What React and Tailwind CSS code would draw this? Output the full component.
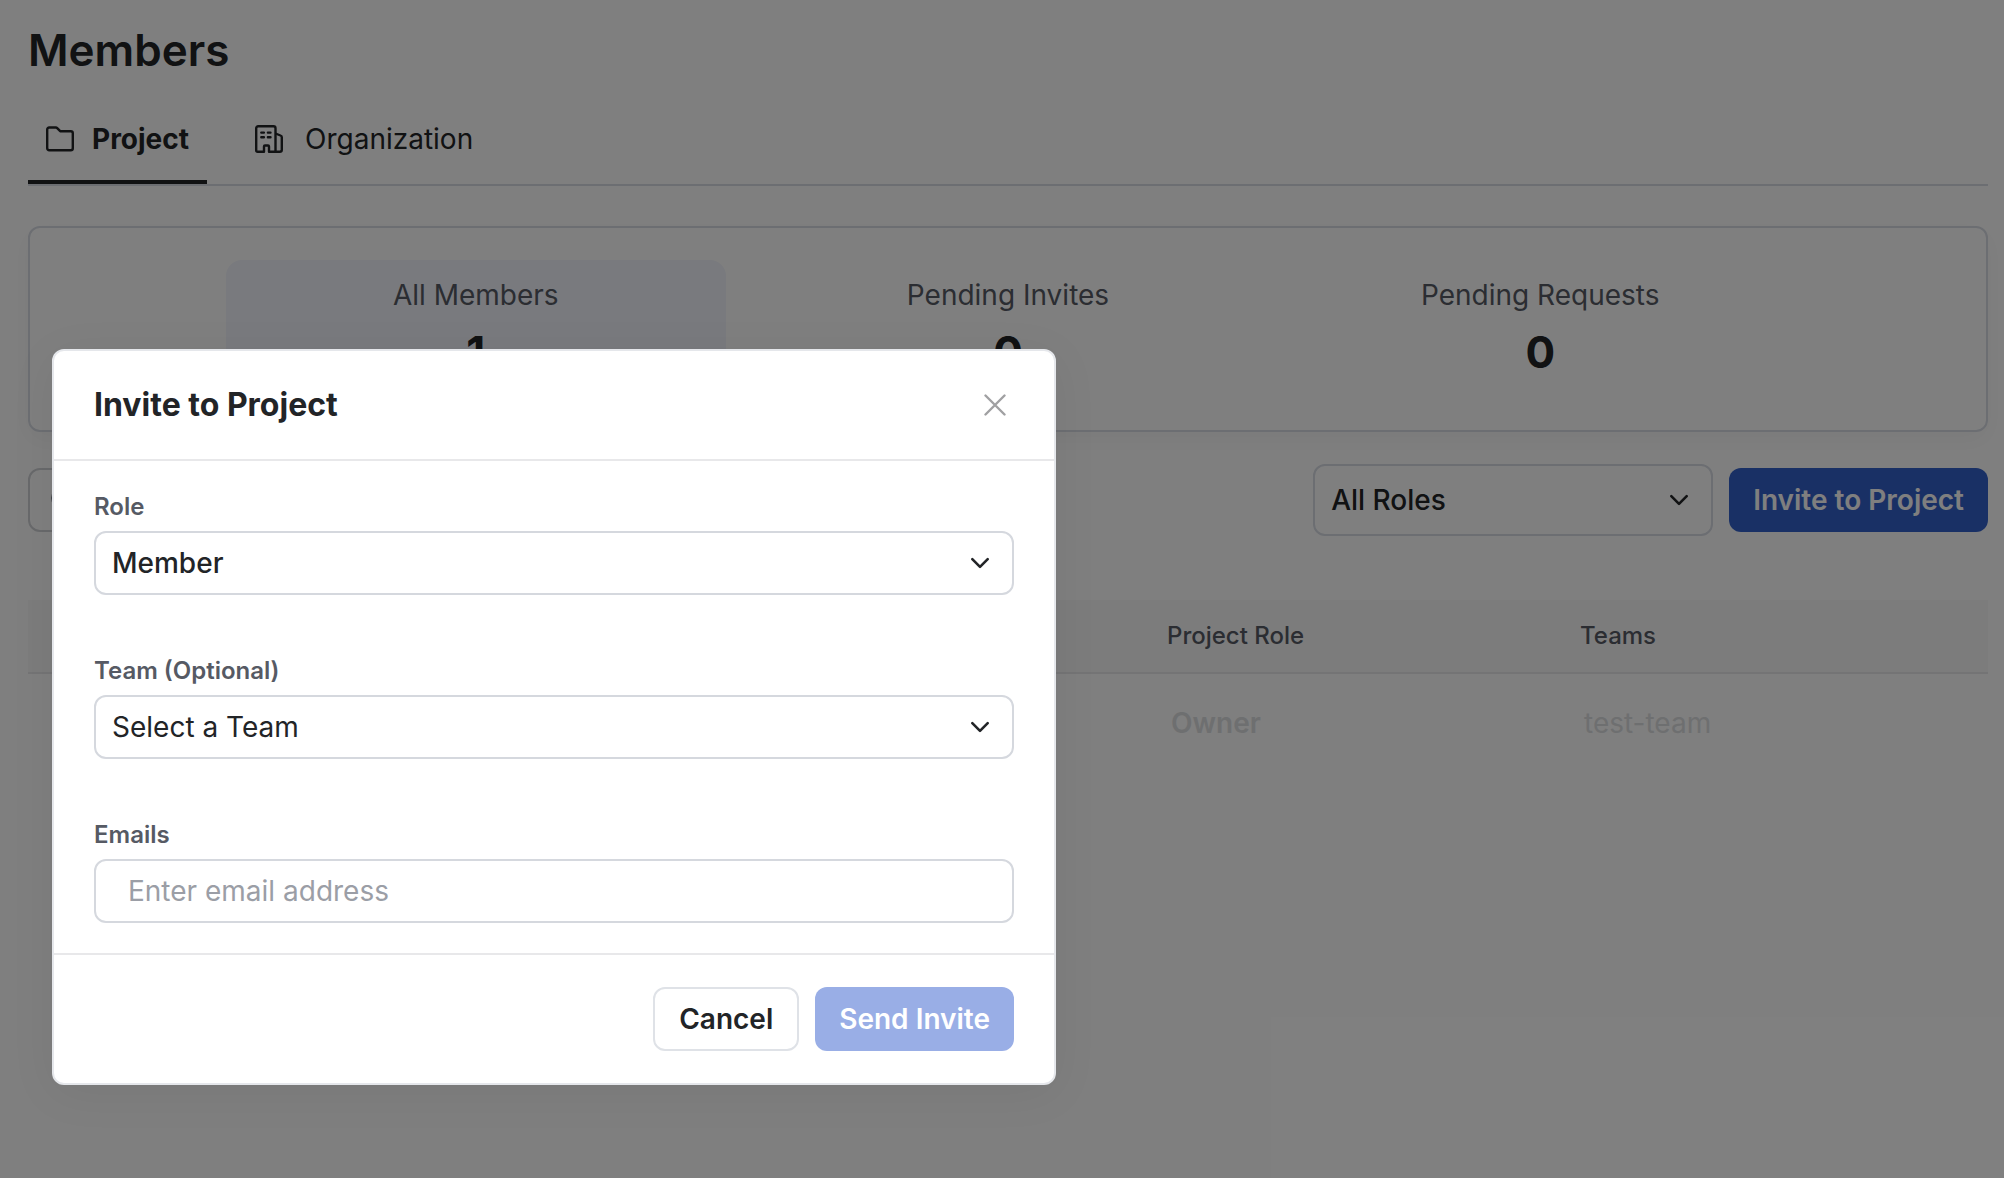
import React from "react";

function FolderIcon() {
  return (
    <svg className="h-7 w-7" viewBox="0 0 28 28" fill="none" stroke="currentColor" strokeWidth="2.400" strokeLinejoin="round" aria-hidden="true">
      <path d="M1.200 4.500A2 2 0 0 1 3.200 2.500h6.600a2 2 0 0 1 1.400.6L14.200 6.200H24.800A2 2 0 0 1 26.800 8.200v15A2 2 0 0 1 24.800 25.200H3.200A2 2 0 0 1 1.200 23.200Z" />
    </svg>
  );
}

function BuildingIcon() {
  return (
    <svg className="h-7 w-7" viewBox="0 0 28 28" fill="none" stroke="currentColor" strokeWidth="2.400" strokeLinejoin="round" aria-hidden="true">
      <path d="M1.200 3.200a2 2 0 0 1 2-2h15.300a2 2 0 0 1 2 2v23.600h-6.500v-5.300a1 1 0 0 0-1-1h-3a1 1 0 0 0-1 1v5.300H2.700a1.500 1.500 0 0 1-1.500-1.500Z" />
      <path d="M20.500 8.500l5 2a2 2 0 0 1 1.300 1.900v12.400a2 2 0 0 1-2 2h-4.300" />
      <path d="M6.300 7.600h2.600M12.900 7.600h2.600M6.300 12.200h2.600M12.900 12.200h2.600" strokeLinecap="round" />
    </svg>
  );
}

function Chevron() {
  return (
    <svg className="pointer-events-none absolute right-6 top-1/2 h-5 w-5 -translate-y-1/2" viewBox="0 0 20 20" fill="none" stroke="currentColor" strokeWidth="2.600" strokeLinecap="round" strokeLinejoin="round" aria-hidden="true">
      <path d="M2.300 6.200l7.700 7.700 7.700-7.700" />
    </svg>
  );
}

const stats = [
  { label: "All Members", value: 1, active: true },
  { label: "Pending Invites", value: 0, active: false },
  { label: "Pending Requests", value: 0, active: false },
];

function Members() {
  return (
    <main className="pl-7 pr-4 pt-5">
      <h1 className="text-[44px] font-semibold leading-[60px]">Members</h1>
      <nav className="mt-4 flex gap-7 border-b-2 border-[#d8dce4] text-[28px] leading-[40px]">
        <button type="button" className="flex h-[88px] items-center gap-[18px] border-b-4 border-[#222427] px-[18px] pt-0.5 font-bold">
          <FolderIcon />
          Project
        </button>
        <button type="button" className="flex h-[88px] items-center gap-[22px] border-b-4 border-transparent px-5 pt-0.5">
          <BuildingIcon />
          Organization
        </button>
      </nav>

      <section className="mt-10 rounded-xl border-2 border-[#d8dce4] py-8 shadow-[0_8px_24px_rgba(0,0,0,0.04)]">
        <div className="mx-auto grid w-4/5 grid-cols-3 gap-8">
          {stats.map((s) => (
            <button
              key={s.label}
              type="button"
              className={s.active ? "flex h-[138px] flex-col items-center rounded-2xl bg-[#f2f4fc] pt-[13px]" : "flex h-[138px] flex-col items-center rounded-2xl pt-[13px]"}
            >
              <span className="text-[28px] leading-[44px] text-[#565a64]">{s.label}</span>
              <span className="text-[44px] font-bold leading-[70px]">{s.value}</span>
            </button>
          ))}
        </div>
      </section>

      <div className="mt-8 flex items-center justify-between gap-4">
        <label className="flex h-16 w-[560px] items-center gap-3 rounded-xl border-2 border-[#d0d2d6] px-5 text-[28px]">
          <svg className="h-6 w-6 shrink-0" viewBox="0 0 24 24" fill="none" stroke="#7b7f88" strokeWidth="2" aria-hidden="true">
            <circle cx="11" cy="10" r="9" />
            <path d="M17.500 16.500L23 22" />
          </svg>
          <input type="search" aria-label="Search members" className="min-w-0 flex-1 outline-none" />
        </label>
        <div className="flex items-center gap-4">
          <div className="relative w-[400px]">
            <select aria-label="Filter by role" className="h-[72px] w-full appearance-none rounded-xl border-2 border-[#d8dce4] px-4 text-[28px] font-medium">
              <option>All Roles</option>
            </select>
            <Chevron />
          </div>
          <button type="button" className="h-16 rounded-xl bg-[#3361cb] px-6 text-[28px] font-semibold text-white">
            Invite to Project
          </button>
        </div>
      </div>

      <table className="mt-16 w-full text-left">
        <thead>
          <tr className="h-[73px] border-b-2 border-[#e8e8ea] bg-[#f8f8f9] text-2xl text-[#565a64]">
            <th className="w-[1113px]" aria-label="Member" />
            <th className="w-[413px] px-[26px] font-medium">Project Role</th>
            <th className="px-[26px] font-medium">Teams</th>
          </tr>
        </thead>
        <tbody>
          <tr className="h-[98px] text-[28px] text-[#dcdee1]">
            <td />
            <td className="px-[30px] font-semibold">Owner</td>
            <td className="px-[30px]">test-team</td>
          </tr>
        </tbody>
      </table>
    </main>
  );
}

const label = "mb-2 block text-2xl font-semibold leading-8 text-[#565a64]";

function InviteDialog() {
  return (
    <div className="absolute inset-0 flex items-start bg-black/50 pl-[52px] pt-[349px]">
      <form role="dialog" aria-labelledby="invite-title" className="w-[1004px] rounded-xl border-2 border-[#e5e7eb] bg-white shadow-[0_8px_48px_rgba(0,0,0,0.06)]">
        <header className="flex h-[110px] items-center justify-between border-b-2 border-[#e8e8ea] px-10">
          <h2 id="invite-title" className="text-[32px] font-bold">Invite to Project</h2>
          <button type="button" aria-label="Close" className="p-2">
            <svg className="h-[22px] w-[22px]" viewBox="0 0 22 22" fill="none" stroke="#a0a0a2" strokeWidth="2.400" strokeLinecap="round" aria-hidden="true">
              <path d="M1.500 1.500l19 19M20.500 1.500l-19 19" />
            </svg>
          </button>
        </header>
        <div className="flex flex-col gap-[60px] px-10 py-[30px]">
          <div>
            <label htmlFor="role" className={label}>Role</label>
            <div className="relative">
              <select id="role" className="h-16 w-full appearance-none rounded-xl border-2 border-[#d5d8de] px-4 text-[28px] font-medium">
                <option>Member</option>
              </select>
              <Chevron />
            </div>
          </div>
          <div>
            <label htmlFor="team" className={label}>Team (Optional)</label>
            <div className="relative">
              <select id="team" className="h-16 w-full appearance-none rounded-xl border-2 border-[#d5d8de] px-4 text-[28px]">
                <option>Select a Team</option>
              </select>
              <Chevron />
            </div>
          </div>
          <div>
            <label htmlFor="emails" className={label}>Emails</label>
            <input id="emails" type="text" placeholder="Enter email address" className="block h-16 w-full rounded-xl border-2 border-[#d5d8de] px-8 text-[28px] placeholder:text-[#9b9ea6]" />
          </div>
        </div>
        <footer className="flex justify-end gap-4 border-t-2 border-[#e8e8ea] px-10 py-8 text-[28px] font-semibold">
          <button type="button" className="h-16 rounded-xl border-2 border-[#dfe2e7] px-6">Cancel</button>
          <button type="submit" disabled className="h-16 rounded-xl bg-[#99aee6] px-6 text-white">Send Invite</button>
        </footer>
      </form>
    </div>
  );
}

export default function App() {
  return (
    <div className="relative min-h-screen bg-white font-['Inter',sans-serif] text-[#222427]">
      <Members />
      <InviteDialog />
    </div>
  );
}
